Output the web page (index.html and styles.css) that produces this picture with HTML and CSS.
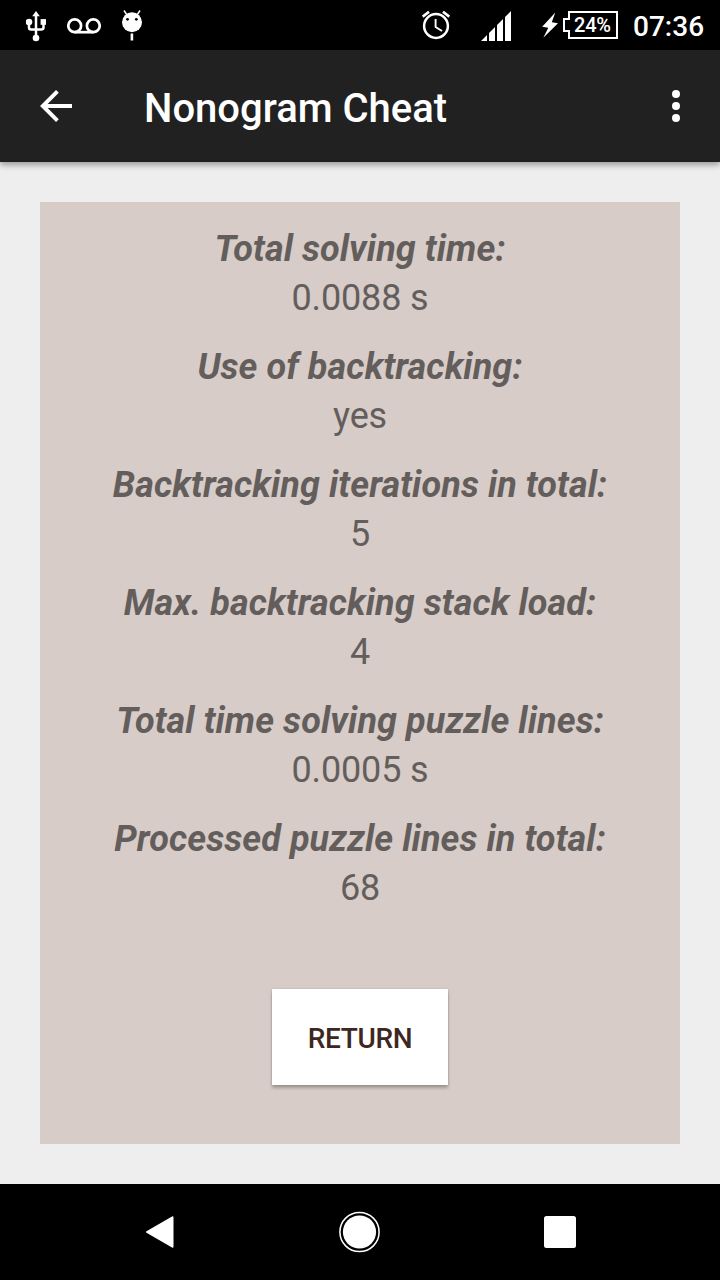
FILE: index.html
```html
<!DOCTYPE html>
<html lang="en">
<head>
<meta charset="utf-8">
<title>Nonogram Cheat</title>
<link rel="stylesheet" href="styles.css">
</head>
<body>
<div class="screen">
  <header class="status-bar">
    <div class="notifications">
      <svg width="20" height="50" viewBox="26 0 20 50">
        <path d="M36 15V38M29 22V27.500Q29 29.500 31 29.500H41Q43.500 29.500 43.500 27.500V22" fill="none" stroke="#fff" stroke-width="2.500"/>
        <path d="M36 11L39.800 16.300H32.200Z" fill="#fff"/>
        <circle cx="29" cy="22" r="3.300" fill="#fff"/>
        <rect x="40.600" y="19.100" width="5.400" height="5.700" fill="#fff"/>
        <circle cx="36" cy="38" r="3.300" fill="#fff"/>
      </svg>
      <svg width="34" height="50" viewBox="67 0 34 50" fill="none" stroke="#fff" stroke-width="2.700">
        <circle cx="74.700" cy="25.700" r="6.400"/><circle cx="93.300" cy="25.700" r="6.400"/><path d="M74.700 32.200H93.300"/>
      </svg>
      <svg width="20" height="50" viewBox="122 0 20 50">
        <circle cx="132" cy="22.200" r="10" fill="#fff"/>
        <path d="M127 15L124 10.500M137 15L140 10.500" stroke="#fff" stroke-width="1.500"/>
        <circle cx="127.500" cy="19.300" r="1.400"/><circle cx="136.300" cy="19.300" r="1.400"/>
        <path d="M131.900 33.500V40.500" stroke="#fff" stroke-width="2.600"/>
      </svg>
    </div>
    <div class="system-icons">
      <svg class="alarm" width="28" height="50" viewBox="422 0 28 50" fill="none" stroke="#fff">
        <circle cx="436" cy="26" r="11.900" stroke-width="2.500"/>
        <path d="M422.700 16.700L429 11.800M449.300 16.700L443 11.800" stroke-width="2.700"/>
        <path d="M435.600 19V27L442 31" stroke-width="1.900"/>
      </svg>
      <svg class="signal" width="30" height="50" viewBox="481 0 30 50" fill="#fff">
        <path d="M481 41L487 35V41ZM489 41V33L495 27V41ZM497 41V25L503 19V41ZM505 41V17L511 11V41Z"/>
      </svg>
      <svg class="bolt" width="16" height="50" viewBox="542 0 16 50" fill="#fff">
        <path d="M555.300 12.600L542.200 26.800L548.300 27.800L543.300 37.800L558 23.200L551.800 22.200Z"/>
      </svg>
      <div class="battery">
        <svg class="battery-outline" width="56" height="50" viewBox="563 0 56 50" fill="none" stroke="#fff" stroke-width="2">
          <path d="M569 12H617V38H569V31H564V19H569Z"/>
        </svg>
        <span class="battery-level">24%</span>
      </div>
      <span class="clock">07:36</span>
    </div>
  </header>

  <nav class="app-bar">
    <svg width="32" height="32" viewBox="0 0 32 32" fill="none" stroke="#fff" stroke-width="4">
      <path d="M32 16H3M17.400 1.400L2.800 16L17.400 30.600" stroke-width="3.900"/>
    </svg>
    <h1 class="title">Nonogram Cheat</h1>
    <svg width="8" height="32" viewBox="0 0 8 32" fill="#fff">
      <circle cx="4" cy="4" r="4"/><circle cx="4" cy="16" r="4"/><circle cx="4" cy="28" r="4"/>
    </svg>
  </nav>

  <main class="content">
    <section class="panel">
      <dl class="stats">
        <div class="stat"><dt class="label">Total solving time:</dt><dd class="value">0.0088 s</dd></div>
        <div class="stat"><dt class="label">Use of backtracking:</dt><dd class="value">yes</dd></div>
        <div class="stat"><dt class="label">Backtracking iterations in total:</dt><dd class="value">5</dd></div>
        <div class="stat"><dt class="label">Max. backtracking stack load:</dt><dd class="value">4</dd></div>
        <div class="stat"><dt class="label">Total time solving puzzle lines:</dt><dd class="value">0.0005 s</dd></div>
        <div class="stat"><dt class="label">Processed puzzle lines in total:</dt><dd class="value">68</dd></div>
      </dl>
      <button class="return-button">RETURN</button>
    </section>
  </main>

  <footer class="nav-bar">
    <svg width="40" height="42" viewBox="140 1211 40 42" fill="#fff" stroke="#fff" stroke-width="2" stroke-linejoin="round">
      <path d="M147 1232L172.500 1217.300V1246.700Z"/>
    </svg>
    <svg width="42" height="42" viewBox="339 1211.200 42 42">
      <circle cx="359.500" cy="1232.200" r="19.600" fill="none" stroke="#fff" stroke-width="1.500"/>
      <circle cx="359.500" cy="1232.200" r="16.600" fill="#fff"/>
    </svg>
    <svg width="40" height="42" viewBox="540 1211 40 42" fill="#fff">
      <rect x="544" y="1216" width="32" height="32" rx="2.500"/>
    </svg>
  </footer>
</div>
</body>
</html>
```
FILE: styles.css
```css
body {
  margin: 0;
  font-family: Roboto, "Liberation Sans", sans-serif;
}

svg {
  display: block;
  flex: none;
}

.screen {
  display: flex;
  flex-direction: column;
  width: 720px;
  height: 1280px;
  overflow: hidden;
  background: #eeeeee;
}

.status-bar {
  display: flex;
  justify-content: space-between;
  height: 50px;
  padding: 0 16px 0 26px;
  background: #000;
  color: #fff;
}

.notifications {
  display: flex;
  gap: 21px;
}

.system-icons {
  display: flex;
}

.alarm {
  margin-right: 31px;
}

.signal {
  margin-right: 31px;
}

.bolt {
  margin-right: 5px;
}

.battery {
  position: relative;
  width: 56px;
  margin-right: 14px;
}

.battery-level {
  position: absolute;
  top: 0;
  left: 11px;
  font-size: 20px;
  font-weight: 500;
  letter-spacing: -0.2px;
  line-height: 50px;
}

.clock {
  width: 71px;
  font-size: 28px;
  font-weight: 500;
  line-height: 53px;
}

.app-bar {
  z-index: 1;
  display: flex;
  align-items: center;
  height: 112px;
  padding: 0 40px;
  background: #212121;
  box-shadow: 0 3px 6px rgba(0, 0, 0, 0.35);
}

.title {
  flex: 1;
  margin: 6px 0 0 72px;
  color: #fff;
  font-size: 40px;
  font-weight: 500;
  line-height: 48px;
}

.content {
  display: flex;
  flex: 1;
  padding: 40px;
}

.panel {
  display: flex;
  flex: 1;
  flex-direction: column;
  align-items: center;
  padding-top: 23px;
  background: #d7ccc8;
}

.stats {
  display: flex;
  flex-direction: column;
  gap: 20px;
  margin: 0;
  color: #635e5c;
  font-size: 36px;
  line-height: 49px;
  text-align: center;
}

.label {
  font-style: italic;
  font-weight: 700;
  letter-spacing: 0.09px;
}

.value {
  margin: 0;
  letter-spacing: -0.15px;
}

.return-button {
  width: 176px;
  height: 96px;
  margin-top: 76px;
  padding: 3px 0 0;
  border: 0;
  background: #fff;
  box-shadow: 0 3px 3px rgba(0, 0, 0, 0.25), 0 0 2px rgba(0, 0, 0, 0.15);
  color: #3e2723;
  font-family: inherit;
  font-size: 28px;
  font-weight: 500;
  letter-spacing: -0.35px;
}

.nav-bar {
  display: flex;
  align-items: center;
  justify-content: space-between;
  height: 96px;
  padding: 0 140px;
  background: #000;
}
```
